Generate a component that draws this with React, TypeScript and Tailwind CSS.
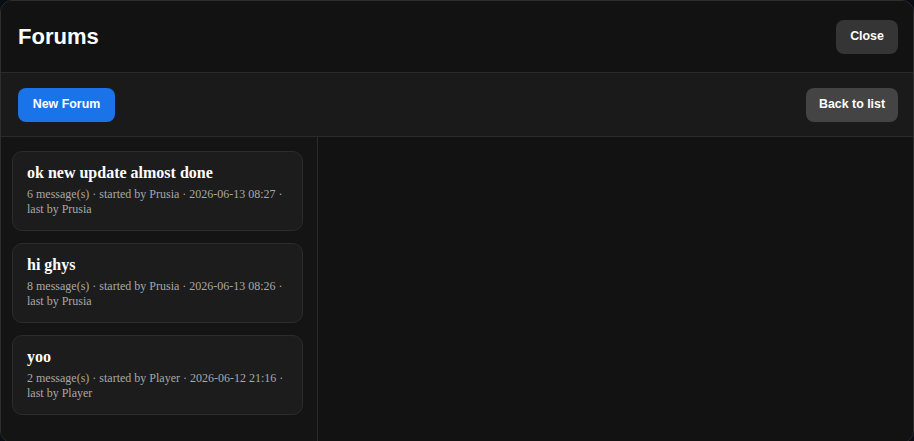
import React from "react";

const threads = [
  { title: "ok new update almost done", meta: "6 message(s) · started by Prusia · 2026-06-13 08:27 · last by Prusia" },
  { title: "hi ghys", meta: "8 message(s) · started by Prusia · 2026-06-13 08:26 · last by Prusia" },
  { title: "yoo", meta: "2 message(s) · started by Player · 2026-06-12 21:16 · last by Player" },
];

export default function App() {
  return (
    <div className="w-[914px] h-[441px] bg-[#0b0d14] overflow-hidden">
      <div
        className="w-[914px] h-[443px] rounded-[12px] border border-[#2e2e2e] bg-[#121212] flex flex-col overflow-hidden"
        style={{ fontFamily: '"Liberation Sans", Arial, sans-serif' }}
      >
        <div className="h-[72px] shrink-0 flex items-center justify-between pl-[17px] pr-[15px] bg-[#121212] border-b border-[#2a2a2a]">
          <h1 className="text-[22px] font-bold text-white">Forums</h1>
          <button className="h-[34px] w-[62px] rounded-[8px] bg-[#353535] text-white text-[12.4px] font-bold">Close</button>
        </div>
        <div className="h-[64px] shrink-0 flex items-center justify-between pl-[17px] pr-[15px] bg-[#1a1a1a] border-b border-[#2a2a2a]">
          <button className="h-[34px] w-[97px] rounded-[8px] bg-[#1a73e8] text-white text-[12.4px] font-bold">New Forum</button>
          <button className="h-[34px] w-[92px] rounded-[8px] bg-[#444444] text-white text-[12.4px] font-bold">Back to list</button>
        </div>
        <div className="flex flex-1 min-h-0">
          <div className="w-[317px] shrink-0 border-r border-[#2a2a2a] bg-[#141414] pt-[14px] pl-[11px] pr-[14px] flex flex-col gap-[12px]">
            {threads.map((t) => (
              <div
                key={t.title}
                className="h-[80px] rounded-[10px] border border-[#2c2c2c] bg-[#1c1c1c] px-[14px] pt-[11px]"
                style={{ fontFamily: '"Liberation Serif", "Times New Roman", serif' }}
              >
                <div className="text-[16px] font-bold text-white leading-[20px]">{t.title}</div>
                <div className="mt-[4px] text-[12px] leading-[15px] text-[#a8a8a8]">{t.meta}</div>
              </div>
            ))}
          </div>
          <div className="flex-1 bg-[#121212]" />
        </div>
      </div>
    </div>
  );
}
